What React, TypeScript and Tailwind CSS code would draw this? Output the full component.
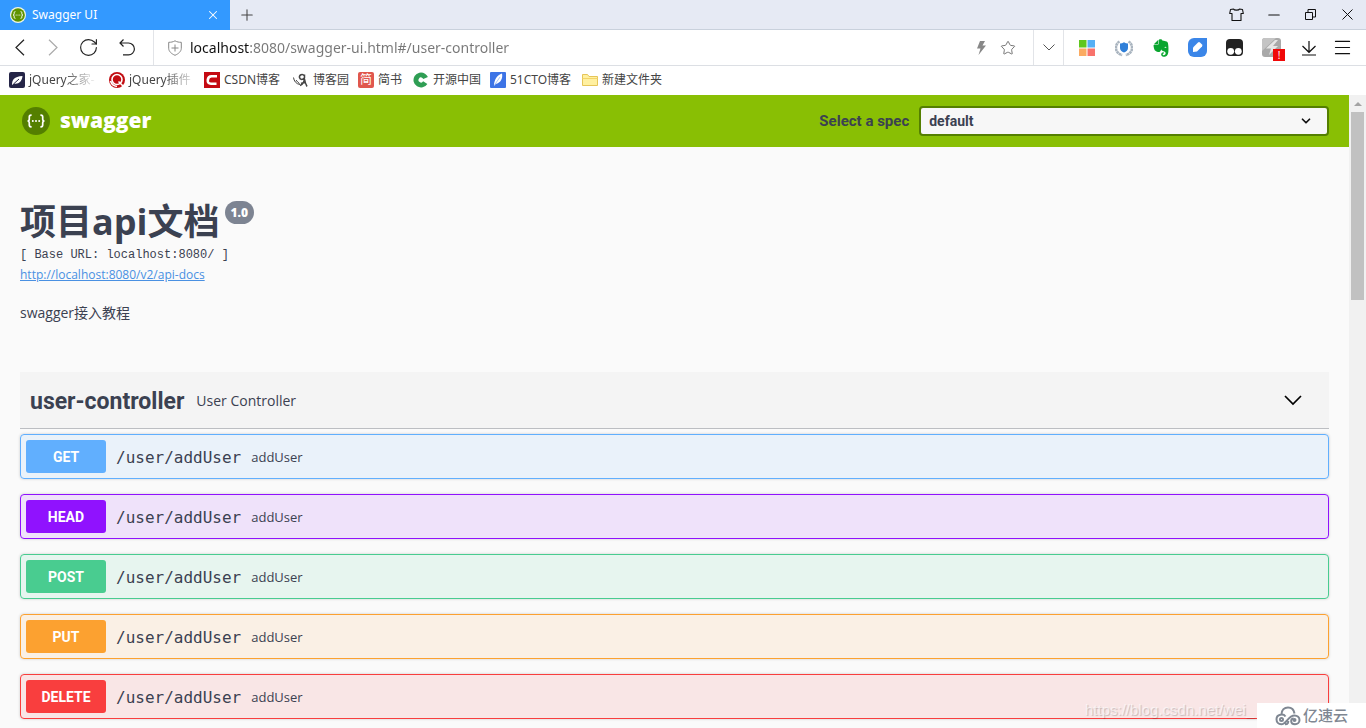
import { type FC, type ReactNode } from 'react';
import { ChevronDown, Menu, Minus, Plus, RotateCw, Star, X } from 'lucide-react';
import { FaEvernote } from 'react-icons/fa';

const SwaggerMark: FC<{ className: string; fill: string; ring?: string }> = ({ className, fill, ring = fill }) => (
  <svg viewBox="0 0 28 28" className={className} aria-hidden="true">
    <circle cx="14" cy="14" r="14" fill={ring} />
    <circle cx="14" cy="14" r="12" fill={fill} />
    <g fill="none" stroke="#fff" strokeWidth="1.7">
      <path d="M9.6 8.2H9c-1.2 0-1.7.6-1.7 1.7v2c0 1.3-.5 2.1-1.8 2.1 1.3 0 1.8.8 1.8 2.1v2c0 1.1.5 1.7 1.7 1.7h.6" />
      <path d="M18.4 8.2h.6c1.2 0 1.7.6 1.7 1.7v2c0 1.3.5 2.1 1.8 2.1-1.3 0-1.8.8-1.8 2.1v2c0 1.1-.5 1.7-1.7 1.7h-.6" />
    </g>
    <g fill="#fff">
      <circle cx="10.8" cy="14" r="1" />
      <circle cx="14" cy="14" r="1" />
      <circle cx="17.2" cy="14" r="1" />
    </g>
  </svg>
);

const TitleBar: FC = () => (
  <div className="flex h-[30px] shrink-0 items-stretch border-b border-[#c9d1dc] bg-[#e6eaf4]">
    <div className="-mb-px flex w-[230px] items-center gap-1.5 bg-[#3399ff] pr-2.5 pl-2.5 text-white">
      <SwaggerMark className="size-4" fill="#5f9300" ring="#f2f7e6" />
      <span className="flex-1 text-[12px]">Swagger UI</span>
      <button type="button" aria-label="Close tab">
        <X size={14} strokeWidth={1.8} />
      </button>
    </div>
    <button type="button" aria-label="New tab" className="ml-2 text-[#444]">
      <Plus size={18} strokeWidth={1.4} />
    </button>
    <div className="ml-auto flex text-[#111]">
      <button type="button" aria-label="Skin" className="flex w-[37px] items-center justify-center">
        <svg viewBox="0 0 15 13" className="h-[13px] w-[15px]" fill="none" stroke="currentColor" strokeWidth="1.1">
          <path d="M4.500 1L1.500 1.500.7 5.500h2.300v7h9v-7h2.300L13.500 1.500 10.500 1C10 2.500 5 2.500 4.500 1z" strokeLinejoin="round" />
        </svg>
      </button>
      <button type="button" aria-label="Minimize" className="flex w-[37px] items-center justify-center">
        <Minus size={18} strokeWidth={1.4} />
      </button>
      <button type="button" aria-label="Restore" className="flex w-[37px] items-center justify-center">
        <svg viewBox="0 0 11 11" className="size-[11px]" fill="none" stroke="currentColor">
          <path d="M.5 3.500h7v7h-7zM3 3.500v-3h7.500v7.500h-3" />
        </svg>
      </button>
      <button type="button" aria-label="Close" className="flex w-[37px] items-center justify-center">
        <svg viewBox="0 0 11 11" className="size-[11px]" fill="none" stroke="currentColor">
          <path d="M.5.5l10 10M10.500.5l-10 10" />
        </svg>
      </button>
    </div>
  </div>
);

const extensions: { name: string; icon: ReactNode }[] = [
  {
    name: 'Apps',
    icon: (
      <svg viewBox="0 0 16 16" className="size-4">
        <path fill="#5fc71e" d="M0 0h7.500v7.500H0z" />
        <path fill="#55b0f5" d="M8.500 0H16v7.500H8.500z" />
        <path fill="#fbab62" d="M0 8.500h7.500V16H0z" />
        <path fill="#f8736c" d="M8.500 8.500H16V16H8.500z" />
      </svg>
    ),
  },
  {
    name: 'Protection',
    icon: (
      <svg viewBox="0 0 18 18" className="size-[18px]">
        <path fill="none" stroke="#a9b4bf" strokeWidth="2.6" strokeDasharray="2.4 .4" d="M4.500 2.500a7.300 7.300 0 0 0 2.700 13.500M13.500 2.500a7.300 7.300 0 0 1-2.700 13.500" />
        <path fill="#2f7fd8" d="M9 3.200c1.300.8 2.600 1.200 4 1.200V9c0 2.200-1.600 3.600-4 4.600C6.600 12.600 5 11.200 5 9V4.400C6.400 4.400 7.700 4 9 3.200z" />
      </svg>
    ),
  },
  { name: 'Evernote', icon: <FaEvernote size={20} color="#0aa52f" /> },
  {
    name: 'Notes',
    icon: (
      <svg viewBox="0 0 19 19" className="size-[19px]">
        <path fill="#3b86e8" d="M6 0h13v13a6 6 0 0 1-6 6H6a6 6 0 0 1-6-6V6a6 6 0 0 1 6-6z" />
        <path fill="#fff" d="M5 14V9.500l5-5q1-.8 2 0l2 2q.8 1 0 2l-5 5z" />
      </svg>
    ),
  },
  {
    name: 'Scripts',
    icon: (
      <svg viewBox="0 0 17 17" className="size-[17px]">
        <rect width="17" height="17" rx="4" fill="#222" />
        <circle cx="4.700" cy="12.300" r="3.400" fill="#fff" />
        <circle cx="12.300" cy="12.300" r="3.400" fill="#fff" />
      </svg>
    ),
  },
  {
    name: 'Flash',
    icon: (
      <span className="relative">
        <svg viewBox="0 0 19 19" className="size-[19px]">
          <rect width="19" height="19" rx="3" fill="#a9a9a9" />
          <path fill="#c4c4c4" d="M3 0h11L0 13V3a3 3 0 0 1 3-3z" />
          <path fill="#e6e6e6" d="M13 2L4 10.500h5L7 17l9-9h-5l5-6z" />
        </svg>
        <span className="absolute -right-1 -bottom-1 size-3 bg-[#f00808] text-center text-[10px] leading-3 text-white">!</span>
      </span>
    ),
  },
  {
    name: 'Downloads',
    icon: (
      <svg viewBox="0 0 16 16" className="size-4" fill="none" stroke="#111" strokeWidth="1.2">
        <path d="M8 1v11M1.500 6L8 12.300 14.500 6M1 15h14" />
      </svg>
    ),
  },
];

const AddressBar: FC = () => (
  <div className="flex h-9 shrink-0 items-stretch border-b border-[#dcdfe4] bg-white">
    <div className="flex w-[154px] items-center border-r border-[#e2e4e8] text-[#222]">
      <button type="button" aria-label="Back" className="ml-1 flex w-8 justify-center">
        <svg viewBox="0 0 10 17" className="h-[17px] w-2.5" fill="none" stroke="currentColor" strokeWidth="1.2">
          <path d="M9 .8L1 8.500l8 7.700" />
        </svg>
      </button>
      <button type="button" aria-label="Forward" className="flex w-[34px] justify-center text-[#aaa]">
        <svg viewBox="0 0 10 17" className="h-[17px] w-2.5" fill="none" stroke="currentColor" strokeWidth="1.2">
          <path d="M1 .8l8 7.700-8 7.700" />
        </svg>
      </button>
      <button type="button" aria-label="Reload" className="flex w-9 justify-center">
        <RotateCw size={21} strokeWidth={1.3} />
      </button>
      <button type="button" aria-label="Undo" className="flex w-[42px] justify-center">
        <svg viewBox="0 0 16 17" className="h-[17px] w-4" fill="none" stroke="currentColor" strokeWidth="1.2">
          <path d="M4.500.5l-3.500 3.500 3.500 3.500M1 4h8.500a5.800 5.800 0 0 1 0 11.800H4" />
        </svg>
      </button>
    </div>
    <label htmlFor="address" className="flex items-center pr-2 pl-3.5" aria-label="Address">
      <svg viewBox="0 0 14 16" className="h-4 w-3.5" fill="none" stroke="#888">
        <path d="M7 .8C9 2 11 2.300 13.300 2.300v6c0 3-2.600 5.400-6.300 7-3.700-1.600-6.300-4-6.300-7v-6C3 2.300 5 2 7 .8zM7 4.500v7M3.500 8h7" />
      </svg>
    </label>
    <input
      id="address"
      type="text"
      defaultValue="localhost:8080/swagger-ui.html#/user-controller"
      className="min-w-0 flex-1 bg-[linear-gradient(to_right,#111_60px,#777_60px)] bg-clip-text text-[14px] text-transparent outline-none"
    />
    <button type="button" aria-label="Turbo" className="flex w-6 items-center justify-center">
      <svg viewBox="0 0 10 14" className="h-3.5 w-2.5" fill="#888">
        <path d="M4 0h5L6.500 4.500H10L2.500 14l2-6.500H1z" />
      </svg>
    </button>
    <button type="button" aria-label="Bookmark this page" className="flex w-[30px] items-center justify-center text-[#777]">
      <Star size={16} strokeWidth={1.5} />
    </button>
    <button type="button" aria-label="History" className="ml-2.5 flex w-[31px] items-center justify-center border-x border-[#e2e4e8] text-[#555]">
      <svg viewBox="0 0 12 7" className="h-[7px] w-3" fill="none" stroke="currentColor">
        <path d="M.5.5L6 6 11.500.5" />
      </svg>
    </button>
    <div className="ml-1 flex">
      {extensions.map(({ name, icon }) => (
        <button key={name} type="button" aria-label={name} className="flex w-[37px] items-center justify-center">
          {icon}
        </button>
      ))}
    </div>
    <button type="button" aria-label="Menu" className="mr-2 flex w-[31px] items-center justify-center text-[#111]">
      <Menu size={21} strokeWidth={1.4} />
    </button>
  </div>
);

const bookmarks: { name: string; className: string; icon: ReactNode }[] = [
  {
    name: 'jQuery之家-',
    className: 'w-[100px]',
    icon: (
      <svg viewBox="0 0 16 16" className="size-4">
        <rect width="16" height="16" rx="2" fill="#252547" />
        <path fill="#fff" d="M3 13c0-5 2-8.500 10.500-9C13 9.500 9.500 12.500 5 11.500z" />
        <path stroke="#252547" fill="none" d="M4.500 12L10 7" />
      </svg>
    ),
  },
  {
    name: 'jQuery插件',
    className: 'w-[95px]',
    icon: (
      <svg viewBox="0 0 16 16" className="size-4">
        <circle cx="8" cy="8" r="8" fill="#c20d12" />
        <circle cx="8" cy="7.500" r="5" fill="none" stroke="#fff" strokeWidth="1.600" />
        <path d="M9.500 9.500l4.500 4.500M1.500 9c1 3 3 5 6.500 5.500" stroke="#fff" strokeWidth="1.600" fill="none" />
      </svg>
    ),
  },
  {
    name: 'CSDN博客',
    className: 'w-[89px]',
    icon: (
      <svg viewBox="0 0 16 16" className="size-4">
        <path fill="#c50a12" d="M0 0h16v16H0z" />
        <path fill="none" stroke="#fff" strokeWidth="2.600" d="M13 4.300H7.500C5 4.300 4 6 3.800 8c-.2 2.500.7 3.700 3.200 3.700h5.500" />
      </svg>
    ),
  },
  {
    name: '博客园',
    className: 'w-[65px]',
    icon: (
      <svg viewBox="0 0 16 16" className="size-4" fill="none" stroke="#444" strokeWidth="1.500">
        <path d="M.5 5.500C1 9 3 12 7 12.500M3 8c1 1.500 2 2.500 3.500 3.500" strokeWidth="1" />
        <path d="M11.500 4c-2-3-5.500-1-5 1.500s3.800 2.500 5 0V2.500M11.500 5c0 4.500-1.500 7.500-4.500 8.500M11.500 7c.5 3 1 5 2.500 7.500M8 11.500c2-1 3.500-1 4.500-1" />
      </svg>
    ),
  },
  {
    name: '简书',
    className: 'w-[55px]',
    icon: <span className="flex size-4 items-center justify-center rounded-xs bg-[#e0574d] text-[12px] leading-4 text-white">简</span>,
  },
  {
    name: '开源中国',
    className: 'w-[77px]',
    icon: (
      <svg viewBox="0 0 16 16" className="size-4">
        <circle cx="8" cy="8" r="5" fill="none" stroke="#2f9e54" strokeWidth="5" strokeDasharray="26 6" transform="rotate(32 8 8)" />
      </svg>
    ),
  },
  {
    name: '51CTO博客',
    className: 'w-[92px]',
    icon: (
      <svg viewBox="0 0 16 16" className="size-4">
        <rect width="16" height="16" rx="1" fill="#3d74e6" />
        <path fill="#fff" d="M4 14C4 8 7 3 12 1.500c1 4.500-1 9.500-6.500 10.500z" />
        <path d="M4.500 13L10 5" stroke="#a9c4f8" fill="none" />
      </svg>
    ),
  },
  {
    name: '新建文件夹',
    className: '',
    icon: (
      <svg viewBox="0 0 16 16" className="size-4" fill="#fff0a0" stroke="#e6c558">
        <path d="M.5 13.500v-11h5l1.500 2h8.500v9z" />
        <path d="M.5 6.500h15" stroke="#f3d468" />
      </svg>
    ),
  },
];

const Bookmarks: FC = () => (
  <nav className="flex h-[29px] shrink-0 items-center bg-white pb-px pl-[9px] text-[12px] text-[#444]">
    {bookmarks.map(({ name, className, icon }, i) => (
      <div key={name} className={className}>
        <a
          href="#"
          className={`flex items-center gap-1 whitespace-nowrap ${
            i < 2 ? 'w-[88px] mask-[linear-gradient(to_right,#000_55px,transparent)]' : ''
          }`}
        >
          <span className="shrink-0">{icon}</span>
          {name}
        </a>
      </div>
    ))}
  </nav>
);

const Topbar: FC = () => (
  <header className="flex h-[52px] items-center justify-between bg-[#89bf04] px-5 font-['Roboto',sans-serif]">
    <a href="#" className="flex items-center gap-2.5 pl-0.5 font-['Open_Sans',sans-serif] text-[21px] font-extrabold text-white">
      <SwaggerMark className="size-7" fill="#547f00" />
      swagger
    </a>
    <div className="flex items-center gap-2.5 font-bold text-[#3b4151]">
      <label htmlFor="spec" className="text-[15px]">
        Select a spec
      </label>
      <div className="relative w-[30vw]">
        <select
          id="spec"
          className="h-[30px] w-full appearance-none rounded border-2 border-[#547f00] bg-[#f7f7f7] px-2 text-[14px] outline-none"
        >
          <option>default</option>
        </select>
        <ChevronDown size={14} strokeWidth={3} className="pointer-events-none absolute top-2 right-4 text-[#111]" />
      </div>
    </div>
  </header>
);

const Info: FC = () => (
  <section className="pt-[52px]">
    <div className="flex items-start gap-[5px]">
      <h2 className="text-[36px] leading-[46px] font-bold">项目api文档</h2>
      <span className="mt-0.5 rounded-full bg-[#7d8492] px-1.5 text-[12px] leading-[23px] font-extrabold text-white">1.0</span>
    </div>
    <pre className="font-['Liberation_Mono',monospace] text-[12px] leading-5">[ Base URL: localhost:8080/ ]</pre>
    <a href="#" className="block text-[12px] leading-5 text-[#4990e2] underline">
      http://localhost:8080/v2/api-docs
    </a>
    <p className="mt-[18px] text-[14px] leading-5">swagger接入教程</p>
  </section>
);

const operations = [
  { method: 'GET', row: 'border-[#61affe] bg-[#61affe]/10', button: 'bg-[#61affe]' },
  { method: 'HEAD', row: 'border-[#9012fe] bg-[#9012fe]/10', button: 'bg-[#9012fe]' },
  { method: 'POST', row: 'border-[#49cc90] bg-[#49cc90]/10', button: 'bg-[#49cc90]' },
  { method: 'PUT', row: 'border-[#fca130] bg-[#fca130]/10', button: 'bg-[#fca130]' },
  { method: 'DELETE', row: 'border-[#f93e3e] bg-[#f93e3e]/10', button: 'bg-[#f93e3e]' },
];

const Operations: FC = () => (
  <section className="mt-[49px]">
    <div className="mb-[5px] flex h-[57px] items-center border-b border-[#3b4151]/30 bg-[#f4f4f4] pr-[26px] pl-2.5">
      <h4 className="pt-1 font-['Roboto',sans-serif] text-[23px] font-bold">user-controller</h4>
      <small className="flex-1 px-3 text-[14px]">User Controller</small>
      <button type="button" aria-label="Collapse user-controller" className="text-black">
        <svg viewBox="0 0 20 20" className="size-5" fill="none" stroke="currentColor" strokeWidth="1.7">
          <path d="M2 6l8 8 8-8" />
        </svg>
      </button>
    </div>
    {operations.map(({ method, row, button }) => (
      <div key={method} className={`mb-[15px] flex items-center rounded border p-[5px] shadow-[0_0_3px_rgba(0,0,0,0.19)] ${row}`}>
        <button
          type="button"
          className={`h-[33px] w-20 rounded-[3px] pt-0.5 font-['Roboto',sans-serif] text-[14px] font-bold text-white ${button}`}
        >
          {method}
        </button>
        <span className="px-2.5 pt-0.5 font-['DejaVu_Sans_Mono',monospace] text-[16px]">/user/addUser</span>
        <span className="pt-0.5 text-[13px]">addUser</span>
      </div>
    ))}
  </section>
);

const Scrollbar: FC = () => (
  <div className="flex w-[17px] shrink-0 flex-col items-center bg-[#f1f1f1]">
    <div className="flex h-[17px] items-center">
      <svg viewBox="0 0 8 4" className="h-1 w-2" fill="#a3a3a3">
        <path d="M4 0l4 4H0z" />
      </svg>
    </div>
    <div className="h-[188px] w-[13px] bg-[#c1c1c1]" />
  </div>
);

const Watermark: FC = () => (
  <div className="pointer-events-none absolute right-0 bottom-0 flex items-end">
    <span className="w-[172px] pb-1.5 font-['Liberation_Sans',sans-serif] text-[15px] leading-6 whitespace-nowrap text-white/60 [text-shadow:1px_1px_1px_rgba(0,0,0,0.2)]">
      https://blog.csdn.net/wei_
    </span>
    <div className="flex h-[25px] w-[109px] items-center gap-0.5 bg-white pl-[18px] text-[15px] font-medium text-[#7f8792]">
      <svg viewBox="0 0 26 20" className="h-5 w-[26px]" fill="none" stroke="currentColor" strokeWidth="2">
        <path d="M6.500 8.500C6.500 4 9.500 1.500 13 1.500s6 2.500 6.500 6M10.500 10.500C8.500 7.500 1.500 8 1.500 13.300c0 3 2 5 4.800 5 5.200 0 6.700-8.800 13.200-8.800 3 0 5 2 5 4.500s-2 4.300-4.500 4.300c-2.200 0-3.800-1.300-3.800-3.200 0-1.500 1-2.600 2.400-2.600M10 18.300c3 0 4-2.300 2.800-4" />
        <circle cx="6.500" cy="13.500" r="1.500" />
        <circle cx="19.500" cy="14" r="1" />
      </svg>
      亿速云
    </div>
  </div>
);

const App: FC = () => (
  <div className="relative flex h-screen flex-col overflow-hidden font-['Noto_Sans','Noto_Sans_CJK_SC',sans-serif]">
    <TitleBar />
    <AddressBar />
    <Bookmarks />
    <div className="flex min-h-0 flex-1">
      <div className="min-w-0 flex-1 overflow-hidden bg-[#fafafa] font-['Open_Sans','Noto_Sans_CJK_SC',sans-serif] text-[#3b4151]">
        <Topbar />
        <main className="px-5">
          <Info />
          <Operations />
        </main>
      </div>
      <Scrollbar />
    </div>
    <Watermark />
  </div>
);

export default App;
